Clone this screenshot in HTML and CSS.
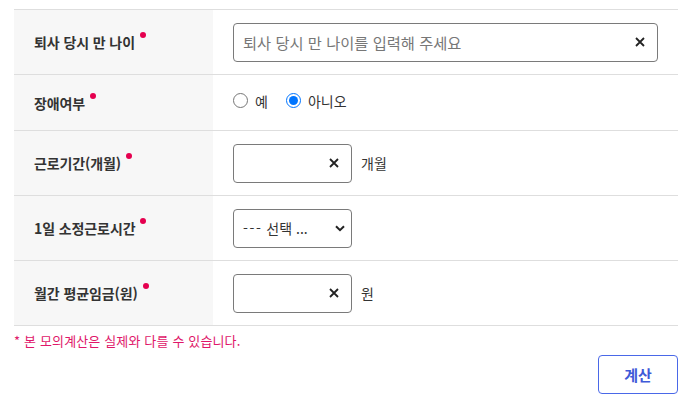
FILE: index.html
```html
<!DOCTYPE html>
<html lang="ko">
<head>
<meta charset="utf-8">
<link rel="stylesheet" href="styles.css">
</head>
<body>
<div class="wrap">
  <div class="form">
    <div class="row">
      <div class="label">퇴사 당시 만 나이<span class="req"></span></div>
      <div class="field">
        <div class="input wide"><span class="ph">퇴사 당시 만 나이를 입력해 주세요</span>
          <svg class="x" width="10" height="10" viewBox="0 0 10 10"><path d="M1 1L9 9M9 1L1 9" stroke="#222" stroke-width="1.8" fill="none"/></svg>
        </div>
      </div>
    </div>
    <div class="row short">
      <div class="label">장애여부<span class="req"></span></div>
      <div class="field">
        <label class="radio"><input type="radio" name="d"> 예</label>
        <label class="radio"><input type="radio" name="d" checked> 아니오</label>
      </div>
    </div>
    <div class="row">
      <div class="label">근로기간(개월)<span class="req"></span></div>
      <div class="field">
        <div class="input small"><span class="ph"></span>
          <svg class="x" width="10" height="10" viewBox="0 0 10 10"><path d="M1 1L9 9M9 1L1 9" stroke="#222" stroke-width="1.8" fill="none"/></svg>
        </div>
        <span class="unit">개월</span>
      </div>
    </div>
    <div class="row">
      <div class="label">1일 소정근로시간<span class="req"></span></div>
      <div class="field">
        <div class="input small select"><span class="sel"><span class="dash">---</span> 선택 ...</span>
          <svg class="chev" width="10" height="7" viewBox="0 0 10 7"><path d="M1 1.2L5 5.2L9 1.2" stroke="#222" stroke-width="2" fill="none"/></svg>
        </div>
      </div>
    </div>
    <div class="row">
      <div class="label">월간 평균임금(원)<span class="req"></span></div>
      <div class="field">
        <div class="input small"><span class="ph"></span>
          <svg class="x" width="10" height="10" viewBox="0 0 10 10"><path d="M1 1L9 9M9 1L1 9" stroke="#222" stroke-width="1.8" fill="none"/></svg>
        </div>
        <span class="unit">원</span>
      </div>
    </div>
  </div>
  <p class="note">* 본 모의계산은 실제와 다를 수 있습니다.</p>
  <div class="actions"><button class="btn">계산</button></div>
</div>
</body>
</html>
```
FILE: styles.css
```css
* { box-sizing: border-box; }
body {
  margin: 0;
  background: #fff;
  font-family: "Noto Sans CJK KR", "Noto Sans", sans-serif;
  color: #333;
}
.wrap { padding: 9px 14px 0 14px; }
.form { border-top: 1px solid #dedede; }
.row {
  display: grid;
  grid-template-columns: 199px 1fr;
  height: 65px;
  border-bottom: 1px solid #dedede;
}
.row.short { height: 56px; }
.label {
  background: #f7f7f7;
  padding-left: 20px;
  display: flex;
  align-items: center;
  font-size: 14px;
  font-weight: 700;
  color: #333;
  letter-spacing: -0.1px;
}
.req {
  display: inline-block;
  width: 6px;
  height: 6px;
  border-radius: 50%;
  background: #e5004f;
  margin-left: 5px;
  position: relative;
  top: -7px;
}
.field {
  padding-left: 20px;
  display: flex;
  align-items: center;
  gap: 9px;
}
.input {
  height: 39px;
  border: 1px solid #7a7a7a;
  border-radius: 4px;
  display: flex;
  align-items: center;
  justify-content: space-between;
  padding: 0 12px 0 9px;
}
.input.wide { width: 425px; }
.input.small { width: 119px; }
.ph { font-size: 15.3px; color: #777; }
.x { flex: none; }
.sel { font-size: 14px; color: #333; }
.dash { letter-spacing: 1.6px; }
.select { padding-right: 6px; }
.unit { font-size: 14px; color: #333; }
.radio {
  display: flex;
  align-items: center;
  font-size: 14px;
  color: #333;
  margin-right: 9px;
  position: relative;
  top: -2px;
}
.radio input {
  width: 15px;
  height: 15px;
  margin: 0 7px 0 0;
}
.note {
  margin: 5px 0 0 0;
  font-size: 13px;
  color: #e0176a;
  letter-spacing: 0.15px;
}
.actions {
  display: flex;
  justify-content: flex-end;
  margin-top: 5px;
}
.btn {
  width: 80px;
  height: 39px;
  border: 1px solid #4a68e8;
  border-radius: 4px;
  background: #fff;
  color: #3f5ad8;
  font-family: "Noto Sans CJK KR", sans-serif;
  font-size: 15px;
  font-weight: 700;
}
```
